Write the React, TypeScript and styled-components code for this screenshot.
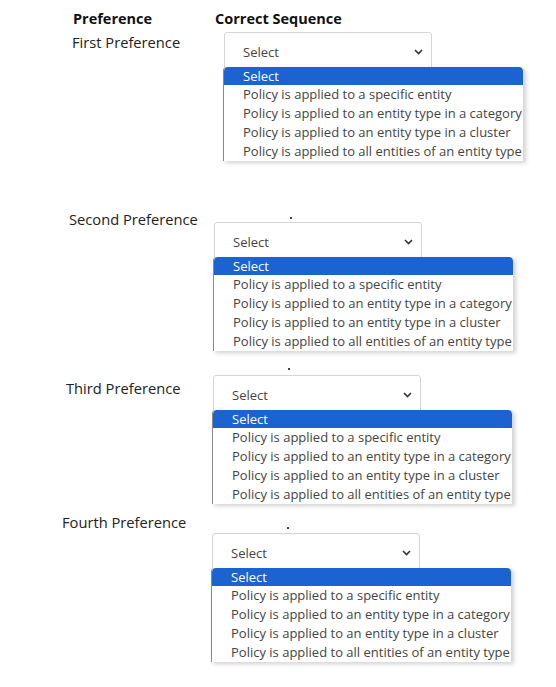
import styled, { createGlobalStyle } from "styled-components";

const GlobalStyle = createGlobalStyle`
  html, body {
    margin: 0;
    padding: 0;
    background: #ffffff;
  }
  body {
    font-family: "Open Sans", "Noto Sans", sans-serif;
    color: #222;
  }
`;

const OPTIONS = [
  "Policy is applied to a specific entity",
  "Policy is applied to an entity type in a category",
  "Policy is applied to an entity type in a cluster",
  "Policy is applied to all entities of an entity type",
];

type BlockSpec = {
  label: string;
  indent: number;
  labelWidth: number;
  gap: number;
  labelTop: number;
  dotTop?: number;
  dotLeft?: number;
  dotAfter?: number;
};

const BLOCKS: BlockSpec[] = [
  { label: "First Preference", indent: 72, labelWidth: 151, gap: 4, labelTop: 0 },
  { label: "Second Preference", indent: 69, labelWidth: 144, gap: 48, labelTop: 0, dotTop: 8, dotLeft: 77, dotAfter: 3 },
  { label: "Third Preference", indent: 66, labelWidth: 146, gap: 16, labelTop: 11, dotTop: 1, dotLeft: 76, dotAfter: 5 },
  { label: "Fourth Preference", indent: 62, labelWidth: 149, gap: 8, labelTop: 0, dotTop: 15, dotLeft: 76, dotAfter: 4 },
];

export default function App() {
  return (
    <>
      <GlobalStyle />
      <Page>
        <HeaderRow>
          <HeaderCell $width={142}>Preference</HeaderCell>
          <HeaderCell>Correct Sequence</HeaderCell>
        </HeaderRow>
        {BLOCKS.map((b) => (
          <PreferenceRow key={b.label} $indent={b.indent} $gap={b.gap}>
            <Label $width={b.labelWidth} $top={b.labelTop}>
              {b.label}
            </Label>
            <Control>
              {b.dotTop !== undefined && (
                <Dot $top={b.dotTop} $left={b.dotLeft ?? 0} $after={b.dotAfter ?? 0} />
              )}
              <SelectBox>
                <span>Select</span>
                <svg width="9" height="6" viewBox="0 0 9 6">
                  <path d="M1 1 L4.5 4.5 L8 1" fill="none" stroke="#333" strokeWidth="1.6" />
                </svg>
              </SelectBox>
              <ListBox>
                <OptionRow $active>Select</OptionRow>
                {OPTIONS.map((o) => (
                  <OptionRow key={o}>{o}</OptionRow>
                ))}
              </ListBox>
            </Control>
          </PreferenceRow>
        ))}
      </Page>
    </>
  );
}

const Page = styled.div`
  width: 556px;
  min-height: 687px;
  padding-top: 8px;
  box-sizing: border-box;
`;

const HeaderRow = styled.div`
  display: flex;
  padding-left: 73px;
  height: 20px;
  align-items: center;
`;

const HeaderCell = styled.div<{ $width?: number }>`
  width: ${(p) => (p.$width ? `${p.$width}px` : "auto")};
  font-weight: 700;
  font-size: 14.5px;
  color: #111;
`;

const PreferenceRow = styled.div<{ $indent: number; $gap: number }>`
  display: flex;
  align-items: flex-start;
  padding-left: ${(p) => p.$indent}px;
  margin-top: ${(p) => p.$gap}px;
`;

const Label = styled.div<{ $width: number; $top: number }>`
  width: ${(p) => p.$width}px;
  padding-top: ${(p) => p.$top}px;
  font-size: 14.7px;
  line-height: 20px;
  color: #222;
  white-space: nowrap;
`;

const Control = styled.div`
  display: flex;
  flex-direction: column;
`;

const Dot = styled.div<{ $top: number; $left: number; $after: number }>`
  width: 2px;
  height: 2px;
  background: #444;
  margin: ${(p) => `${p.$top}px 0 ${p.$after}px ${p.$left}px`};
`;

const SelectBox = styled.div`
  width: 208px;
  height: 38px;
  margin-left: 1px;
  box-sizing: border-box;
  border: 1px solid #d4d4d4;
  border-radius: 3px;
  display: flex;
  align-items: center;
  justify-content: space-between;
  padding: 2px 8px 0 18px;
  font-size: 13px;
  color: #444;
`;

const ListBox = styled.div`
  width: 301px;
  height: 94px;
  margin-top: -3px;
  box-sizing: border-box;
  border-left: 1px solid #8a8a8a;
  border-right: 1px solid #d8d8d8;
  border-radius: 4px 4px 0 0;
  box-shadow: 2px 2px 4px rgba(0, 0, 0, 0.18);
  background: #fff;
  overflow: hidden;
`;

const OptionRow = styled.div<{ $active?: boolean }>`
  height: ${(p) => (p.$active ? 18 : 19)}px;
  line-height: ${(p) => (p.$active ? 18 : 19)}px;
  padding-left: 19px;
  font-size: 13px;
  white-space: nowrap;
  color: ${(p) => (p.$active ? "#fff" : "#444")};
  background: ${(p) => (p.$active ? "#1b63d1" : "transparent")};
  border-radius: ${(p) => (p.$active ? "4px 4px 0 0" : "0")};
`;
